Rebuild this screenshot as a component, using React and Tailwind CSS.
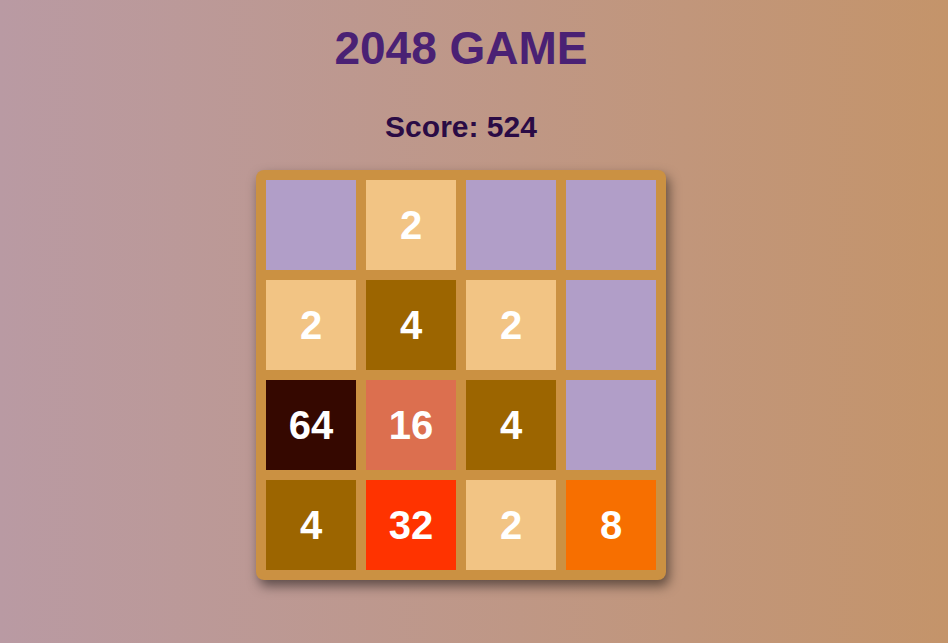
import React from "react";

const tiles = [
  [0, 2, 0, 0],
  [2, 4, 2, 0],
  [64, 16, 4, 0],
  [4, 32, 2, 8],
];

function tileClass(v) {
  switch (v) {
    case 2:
      return "bg-[#f2c484]";
    case 4:
      return "bg-[#9c6500]";
    case 8:
      return "bg-[#f76f00]";
    case 16:
      return "bg-[#dc6f4f]";
    case 32:
      return "bg-[#ff3300]";
    case 64:
      return "bg-[#350800]";
    default:
      return "bg-[#b19ec8]";
  }
}

export default function App() {
  return (
    <div
      className="min-h-[643px] w-full bg-gradient-to-r from-[#b99aa3] to-[#c4946a]"
      style={{ fontFamily: '"Liberation Sans", Arial, sans-serif' }}
    >
      <div className="flex w-[922px] flex-col items-center">
        <h1 className="mt-[25px] text-[46px] font-bold leading-[46px] text-[#4a2174]">
          2048 GAME
        </h1>
        <div className="mt-[41px] text-[30px] font-bold leading-[30px] text-[#2a0b45]">
          Score: 524
        </div>
        <div className="mt-[28px] grid grid-cols-4 gap-[10px] rounded-lg bg-[#cb9142] p-[10px] shadow-[3px_6px_12px_rgba(0,0,0,0.5)]">
          {tiles.flat().map((v, i) => (
            <div
              key={i}
              className={`flex h-[90px] w-[90px] items-center justify-center text-[40px] font-bold leading-[40px] text-white ${tileClass(v)}`}
            >
              {v ? v : ""}
            </div>
          ))}
        </div>
      </div>
    </div>
  );
}
